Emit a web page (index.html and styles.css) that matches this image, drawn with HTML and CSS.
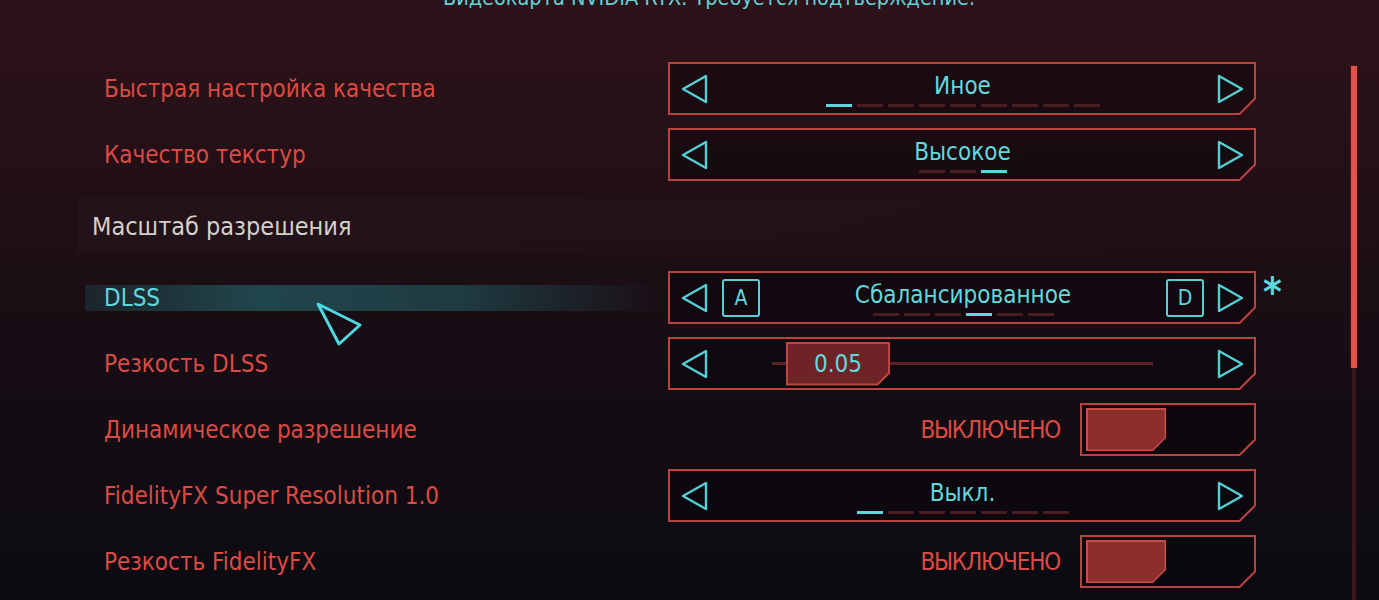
FILE: index.html
```html
<!DOCTYPE html>
<html lang="ru">
<head>
<meta charset="utf-8">
<title>Настройки графики</title>
<link rel="stylesheet" href="styles.css">
</head>
<body>
<div class="screen">
  <div class="main">
    <p class="notice">Видеокарта NVIDIA RTX. Требуется подтверждение.</p>

    <div class="row">
      <div class="label">Быстрая настройка качества</div>
      <div class="ctrl frame">
        <div class="fill selector">
          <svg class="arr arr-l" width="28" height="30" viewBox="0 0 28 30"><polygon points="2,15 25,2 25,28"/></svg>
          <div class="value">
            <span class="val-text">Иное</span>
            <div class="dashes"><i class="on"></i><i></i><i></i><i></i><i></i><i></i><i></i><i></i><i></i></div>
          </div>
          <svg class="arr arr-r" width="28" height="30" viewBox="0 0 28 30"><polygon points="3,2 3,28 26,15"/></svg>
        </div>
      </div>
    </div>

    <div class="row">
      <div class="label">Качество текстур</div>
      <div class="ctrl frame">
        <div class="fill selector">
          <svg class="arr arr-l" width="28" height="30" viewBox="0 0 28 30"><polygon points="2,15 25,2 25,28"/></svg>
          <div class="value">
            <span class="val-text">Высокое</span>
            <div class="dashes"><i></i><i></i><i class="on"></i></div>
          </div>
          <svg class="arr arr-r" width="28" height="30" viewBox="0 0 28 30"><polygon points="3,2 3,28 26,15"/></svg>
        </div>
      </div>
    </div>

    <div class="divider"></div>
    <div class="section">Масштаб разрешения</div>

    <div class="row">
      <div class="label label-active">DLSS</div>
      <div class="ctrl frame has-mark">
        <div class="fill selector">
          <svg class="arr arr-l" width="28" height="30" viewBox="0 0 28 30"><polygon points="2,15 25,2 25,28"/></svg>
          <span class="key key-a">A</span>
          <div class="value">
            <span class="val-text">Сбалансированное</span>
            <div class="dashes"><i></i><i></i><i></i><i class="on"></i><i></i><i></i></div>
          </div>
          <span class="key key-d">D</span>
          <svg class="arr arr-r" width="28" height="30" viewBox="0 0 28 30"><polygon points="3,2 3,28 26,15"/></svg>
        </div>
        <span class="mark">*</span>
      </div>
    </div>

    <div class="row">
      <div class="label">Резкость DLSS</div>
      <div class="ctrl frame">
        <div class="fill selector">
          <svg class="arr arr-l" width="28" height="30" viewBox="0 0 28 30"><polygon points="2,15 25,2 25,28"/></svg>
          <div class="slider">
            <div class="thumb frame"><div class="fill thumb-fill">0.05</div></div>
          </div>
          <svg class="arr arr-r" width="28" height="30" viewBox="0 0 28 30"><polygon points="3,2 3,28 26,15"/></svg>
        </div>
      </div>
    </div>

    <div class="row">
      <div class="label">Динамическое разрешение</div>
      <div class="ctrl toggle-ctrl">
        <span class="state">ВЫКЛЮЧЕНО</span>
        <div class="toggle frame"><div class="fill toggle-fill"><div class="knob frame"><div class="fill knob-fill"></div></div></div></div>
      </div>
    </div>

    <div class="row">
      <div class="label">FidelityFX Super Resolution 1.0</div>
      <div class="ctrl frame">
        <div class="fill selector">
          <svg class="arr arr-l" width="28" height="30" viewBox="0 0 28 30"><polygon points="2,15 25,2 25,28"/></svg>
          <div class="value">
            <span class="val-text">Выкл.</span>
            <div class="dashes"><i class="on"></i><i></i><i></i><i></i><i></i><i></i><i></i></div>
          </div>
          <svg class="arr arr-r" width="28" height="30" viewBox="0 0 28 30"><polygon points="3,2 3,28 26,15"/></svg>
        </div>
      </div>
    </div>

    <div class="row">
      <div class="label">Резкость FidelityFX</div>
      <div class="ctrl toggle-ctrl">
        <span class="state">ВЫКЛЮЧЕНО</span>
        <div class="toggle frame"><div class="fill toggle-fill"><div class="knob frame"><div class="fill knob-fill"></div></div></div></div>
      </div>
    </div>
  </div>

  <div class="scroll">
    <div class="scroll-thumb"></div>
    <div class="scroll-track"></div>
  </div>

  <svg class="cursor" width="56" height="56" viewBox="0 0 56 56"><polygon points="9,8 51,29 30,48"/></svg>
</div>
</body>
</html>
```

FILE: styles.css
```css
html, body {
  margin: 0;
  padding: 0;
}

body {
  background: #0d0b12;
  font-family: "DejaVu Sans Condensed", "Liberation Sans Narrow", "DejaVu Sans", sans-serif;
  font-stretch: condensed;
}

.screen {
  position: relative;
  display: flex;
  width: 1379px;
  height: 600px;
  overflow: hidden;
  background: linear-gradient(180deg, #2e1219 0%, #261017 22%, #1b0e15 48%, #130c13 72%, #0c0b12 100%);
}

.main {
  width: 1262px;
  margin-left: 78px;
  display: flex;
  flex-direction: column;
}

.notice {
  margin: -16px 0 50px;
  height: 28px;
  line-height: 28px;
  font-size: 21.5px;
  color: #5fd3da;
  text-align: center;
  white-space: nowrap;
}

.row {
  display: flex;
  align-items: center;
  height: 53px;
  margin-bottom: 13px;
}

.label {
  width: 556px;
  margin-left: 7px;
  padding-left: 19px;
  height: 26px;
  line-height: 27px;
  font-size: 24px;
  color: #dc4b43;
  white-space: nowrap;
}

.label-active {
  color: #5fd6de;
  background: linear-gradient(90deg, rgba(32, 78, 84, 0.35) 0%, rgba(34, 88, 94, 0.75) 30%, rgba(32, 84, 90, 0.65) 65%, rgba(30, 70, 78, 0) 100%);
}

.ctrl {
  margin-left: 8px;
  width: 588px;
  height: 53px;
}

/* cut-corner frames */
.frame {
  position: relative;
  box-sizing: border-box;
  padding: 2px;
  background: #b9433e;
  clip-path: polygon(0 0, 100% 0, 100% calc(100% - 16px), calc(100% - 16px) 100%, 0 100%);
}

.fill {
  box-sizing: border-box;
  height: 100%;
  clip-path: polygon(0 0, 100% 0, 100% calc(100% - 15px), calc(100% - 15px) 100%, 0 100%);
  background:
    linear-gradient(rgba(6, 3, 8, 0.42), rgba(6, 3, 8, 0.42)),
    linear-gradient(180deg, #2e1219 0%, #261017 22%, #1b0e15 48%, #130c13 72%, #0c0b12 100%);
  background-attachment: fixed, fixed;
}

.has-mark {
  clip-path: none;
  background: none;
  padding: 0;
}

.has-mark > .fill {
  padding: 2px;
  background: #b9433e;
  clip-path: polygon(0 0, 100% 0, 100% calc(100% - 16px), calc(100% - 16px) 100%, 0 100%);
  position: relative;
}

.has-mark > .fill::before {
  content: "";
  position: absolute;
  inset: 2px;
  z-index: 0;
  clip-path: polygon(0 0, 100% 0, 100% calc(100% - 15px), calc(100% - 15px) 100%, 0 100%);
  background:
    linear-gradient(rgba(6, 3, 8, 0.42), rgba(6, 3, 8, 0.42)),
    linear-gradient(180deg, #2e1219 0%, #261017 22%, #1b0e15 48%, #130c13 72%, #0c0b12 100%);
  background-attachment: fixed, fixed;
}

.has-mark > .fill > * {
  position: relative;
  z-index: 1;
}

.mark {
  position: absolute;
  left: calc(100% + 7px);
  top: -1px;
  font-family: "DejaVu Sans", sans-serif;
  font-weight: bold;
  font-size: 40px;
  line-height: 44px;
  color: #5fd6de;
}

.selector {
  display: flex;
  align-items: center;
}

.arr {
  flex: none;
}

.arr polygon {
  fill: none;
  stroke: #55cfd6;
  stroke-width: 2.4;
  stroke-linejoin: round;
}

.arr-l {
  margin-left: 11px;
}

.arr-r {
  margin-right: 10px;
}

.value {
  flex: 1;
  display: flex;
  flex-direction: column;
  align-items: center;
  padding-top: 2px;
}

.val-text {
  font-size: 24px;
  line-height: 28px;
  color: #62d8df;
  white-space: nowrap;
}

.dashes {
  display: flex;
  gap: 5px;
  margin-top: 4px;
}

.dashes i {
  display: block;
  width: 26px;
  height: 3px;
  background: #4a1d23;
}

.dashes i.on {
  background: #5fd6de;
}

.key {
  flex: none;
  box-sizing: border-box;
  width: 38px;
  height: 38px;
  border: 2px solid #58d0d8;
  border-radius: 3px;
  display: flex;
  align-items: center;
  justify-content: center;
  font-size: 21px;
  color: #62d8df;
}

.key-a {
  margin-left: 13px;
}

.key-d {
  margin-right: 12px;
}

.slider {
  flex: 1;
  margin: 0 63px;
  height: 44px;
  display: flex;
  align-items: center;
  background: linear-gradient(#5c2126, #5c2126) center / 100% 3px no-repeat;
}

.thumb {
  width: 104px;
  height: 44px;
  margin-left: 14px;
  background: #c0453f;
  clip-path: polygon(0 0, 100% 0, 100% calc(100% - 12px), calc(100% - 12px) 100%, 0 100%);
}

.thumb-fill {
  background: #6e2427;
  clip-path: polygon(0 0, 100% 0, 100% calc(100% - 11px), calc(100% - 11px) 100%, 0 100%);
  display: flex;
  align-items: center;
  justify-content: center;
  font-size: 24px;
  color: #62d8df;
}

.toggle-ctrl {
  display: flex;
  align-items: center;
  justify-content: flex-end;
  gap: 20px;
}

.state {
  font-size: 24px;
  letter-spacing: -1.2px;
  color: #dc4b43;
  white-space: nowrap;
}

.toggle {
  width: 176px;
  height: 53px;
}

.toggle-fill {
  padding: 3px 4px;
}

.knob {
  width: 80px;
  height: 43px;
  padding: 1.5px;
  background: #c94d46;
  clip-path: polygon(0 0, 100% 0, 100% calc(100% - 13px), calc(100% - 13px) 100%, 0 100%);
}

.knob-fill {
  background: #8c2e2c;
  clip-path: polygon(0 0, 100% 0, 100% calc(100% - 12px), calc(100% - 12px) 100%, 0 100%);
}

.divider {
  height: 2px;
  margin-top: 3px;
  background: #3f9da3;
}

.section {
  height: 57px;
  line-height: 60px;
  padding-left: 14px;
  margin-bottom: 17px;
  font-size: 25px;
  color: #d6d0cb;
  background: linear-gradient(90deg, rgba(255, 240, 245, 0.014), rgba(255, 240, 245, 0.008) 60%, rgba(255, 240, 245, 0));
}

.scroll {
  margin-left: 11px;
  width: 6px;
  padding-top: 66px;
  display: flex;
  flex-direction: column;
  align-items: center;
}

.scroll-thumb {
  width: 6px;
  height: 302px;
  background: #e2514a;
  box-shadow: 0 0 2px #7a2224;
}

.scroll-track {
  flex: 1;
  width: 4px;
  background: #3a1519;
}

.cursor {
  position: absolute;
  left: 309px;
  top: 296px;
}

.cursor polygon {
  fill: none;
  stroke: #4fd8e0;
  stroke-width: 3;
  stroke-linejoin: round;
}
```
